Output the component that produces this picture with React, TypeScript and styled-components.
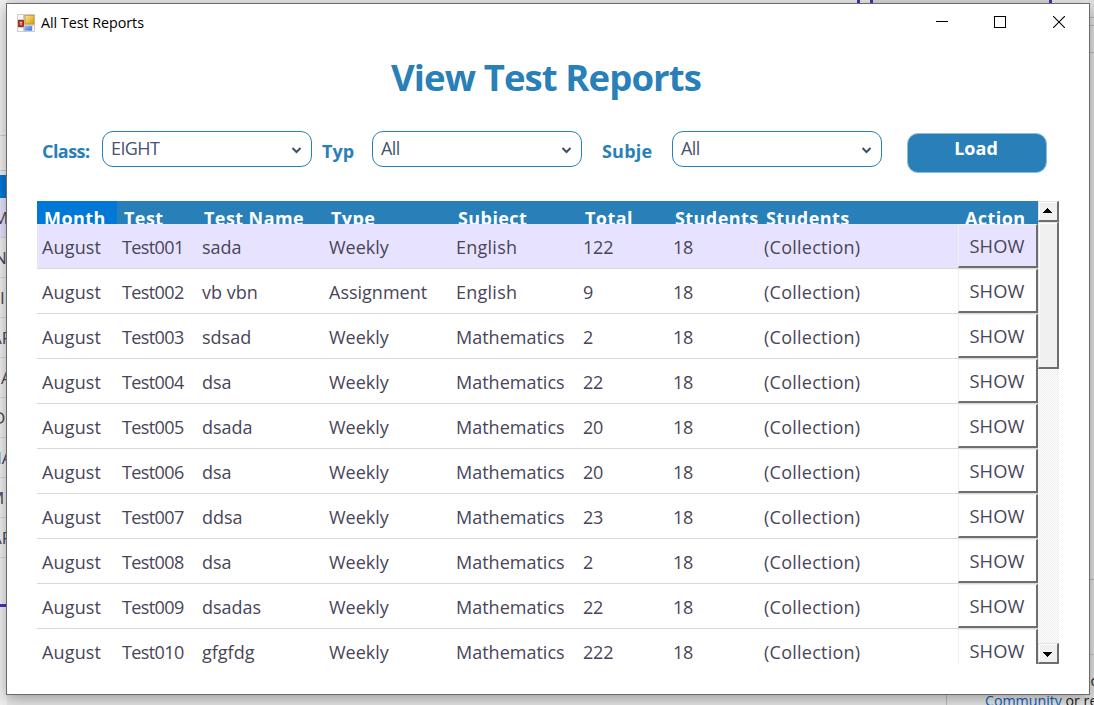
import React from 'react';
import styled, { createGlobalStyle } from 'styled-components';

const blue = '#2980b9';

const GlobalStyle = createGlobalStyle`
  * { box-sizing: border-box; }
  body { margin: 0; overflow: hidden; font-family: 'Open Sans', 'Noto Sans', sans-serif; }
`;

const Desktop = styled.div`
  position: relative;
  width: 1094px;
  height: 705px;
  overflow: hidden;
  background: #e6e6e6;
`;

const LeftStrip = styled.div`
  position: absolute;
  left: 0;
  top: 0;
  width: 7px;
  height: 705px;
  overflow: hidden;
  background: #f0f0f0;
  padding-top: 135px;
`;

const StripGap = styled.div`
  height: 36px;
  border-top: 1px solid #d0d0d0;
  border-bottom: 1px solid #d0d0d0;
`;

const StripHeader = styled.div`
  height: 23px;
  margin-top: 4px;
  background: #0078d7;
`;

const StripRow = styled.div<{ $shift: number; $active?: boolean }>`
  height: 40px;
  line-height: 39px;
  font-size: 17px;
  white-space: nowrap;
  color: #484559;
  border-bottom: 1px solid #d5d3ea;
  background: ${(p) => (p.$active ? '#e7e3ff' : 'transparent')};
  text-indent: ${(p) => p.$shift}px;
`;

const StripRule = styled.div`
  height: 3px;
  margin-top: 46px;
  background: #4535c0;
`;

const TopStrip = styled.div`
  position: absolute;
  left: 857px;
  top: 0;
  width: 195px;
  height: 4px;
  display: flex;
  gap: 10px;
`;

const TopMark = styled.div`
  width: 3px;
  background: #4230b8;
`;

const TopPanel = styled.div`
  flex: 1;
  background: #d4d4d4;
  border-left: 3px solid #4230b8;
  border-right: 3px solid #4230b8;
`;

const RightStrip = styled.div`
  position: absolute;
  right: 0;
  top: 0;
  width: 6px;
  height: 705px;
  background: #e0e0e0;
`;

const RightRule = styled.div<{ $gap: number }>`
  height: 1px;
  margin-top: ${(p) => p.$gap}px;
  background: #b4b4b4;
`;

const HelpPanel = styled.div`
  position: absolute;
  left: 946px;
  top: 654px;
  width: 148px;
  height: 51px;
  border-left: 1px solid #bcbcbc;
  border-top: 1px solid #c0c0c0;
  padding: 15.5px 0 0 38px;
  font-size: 14.2px;
  line-height: 20px;
  white-space: nowrap;
  overflow: hidden;
  color: #1b1b1b;
`;

const HelpLine = styled.div<{ $indent?: number }>`
  padding-left: ${(p) => p.$indent ?? 0}px;
`;

const Link = styled.span`
  color: #0c62c0;
  text-decoration: underline;
`;

const Window = styled.div`
  position: absolute;
  left: 6px;
  top: 3px;
  width: 1084px;
  height: 692px;
  display: flex;
  flex-direction: column;
  background: #fff;
  border: 1px solid #6b6b6b;
  box-shadow: 0 4px 14px rgba(0, 0, 0, 0.32);
`;

const TitleBar = styled.header`
  display: flex;
  align-items: center;
  height: 37px;
  padding: 0 1px 0 10px;
`;

const WindowTitle = styled.span`
  flex: 1;
  padding-left: 6px;
  font-size: 14.3px;
  letter-spacing: -0.03px;
  color: #000;
`;

const WindowButton = styled.span`
  display: flex;
  justify-content: center;
  width: 58.5px;
  padding-bottom: 2px;
`;

const Heading = styled.h1`
  margin: 0;
  height: 76px;
  padding-right: 4px;
  line-height: 72px;
  text-align: center;
  font-size: 36.5px;
  font-weight: 700;
  letter-spacing: -0.9px;
  color: ${blue};
`;

const Filters = styled.div`
  display: flex;
  height: 84px;
  padding: 14px 0 0 35px;
`;

const Label = styled.label<{ $width: number; $spacing: number }>`
  width: ${(p) => p.$width}px;
  line-height: 40px;
  font-size: 18px;
  font-weight: 700;
  letter-spacing: ${(p) => p.$spacing}px;
  color: ${blue};
`;

const Select = styled.div<{ $after: number }>`
  display: flex;
  justify-content: space-between;
  width: 210px;
  height: 36px;
  margin-right: ${(p) => p.$after}px;
  padding: 0 9px 0 8px;
  border: 1px solid ${blue};
  border-radius: 11px;
  line-height: 32px;
  font-size: 18px;
  letter-spacing: -0.6px;
  color: #44546e;
`;

const LoadButton = styled.button`
  width: 140px;
  height: 40px;
  margin-top: 2px;
  padding: 0 2px 10px 0;
  border: 1px solid #8fbcdc;
  border-radius: 11px;
  background: ${blue};
  font: 700 18px/28px 'Open Sans', 'Noto Sans', sans-serif;
  color: #fff;
`;

const Grid = styled.div`
  display: flex;
  width: 1022px;
  height: 463px;
  margin-left: 30px;
`;

const Table = styled.div`
  width: 1001px;
  overflow: hidden;
`;

const columns = '80px 80px 127px 127px 127px 90px 91px 199px 80px';

const HeaderRow = styled.div`
  display: grid;
  grid-template-columns: ${columns};
  height: 23px;
  background: ${blue};
`;

const HeaderCell = styled.div<{ $active?: boolean }>`
  height: 23px;
  overflow: hidden;
  padding-left: 7px;
  background: ${(p) => (p.$active ? '#0078d7' : 'transparent')};
  line-height: 35px;
  font-size: 18px;
  font-weight: 700;
  letter-spacing: 0.42px;
  white-space: nowrap;
  color: #fff;
`;

const Row = styled.div<{ $active: boolean }>`
  display: grid;
  grid-template-columns: ${columns};
  height: 45px;
  background: ${(p) => (p.$active ? '#e7e3ff' : '#fff')};
  border-bottom: 1px solid #dadada;
`;

const Cell = styled.div<{ $spacing: number }>`
  padding-left: 5px;
  line-height: 47px;
  font-size: 18px;
  letter-spacing: ${(p) => p.$spacing}px;
  white-space: nowrap;
  color: #484559;
`;

const ShowButton = styled.div`
  height: 44px;
  border-style: solid;
  border-width: 1px 2px 2px 1px;
  border-color: #efefef #6e6e6e #6e6e6e #efefef;
  line-height: 42px;
  padding-right: 1px;
  text-align: center;
  font-size: 18.3px;
  letter-spacing: 0.15px;
  color: #484559;
`;

const ScrollBar = styled.div`
  display: flex;
  flex-direction: column;
  width: 21px;
  background: repeating-conic-gradient(#ececec 0 25%, #fff 0 50%) 0 0 / 2px 2px;
`;

const ScrollPart = styled.div<{ $height: number; $last?: boolean }>`
  display: flex;
  align-items: flex-start;
  height: ${(p) => p.$height}px;
  margin-top: ${(p) => (p.$last ? 'auto' : '0')};
  padding: ${(p) => (p.$last ? '8px' : '6px')} 0 0 4px;
  background: #f0f0f0;
  border-style: solid;
  border-width: 1px 2px 2px 1px;
  border-color: #e3e3e3 #6e6e6e #6e6e6e #e3e3e3;
  box-shadow: inset 1px 1px #fff;
`;

const AppIcon = () => (
  <svg width="18" height="18" viewBox="0 0 18 18">
    <defs>
      <linearGradient id="gold" x1="0" y1="0" x2="1" y2="1">
        <stop offset="0" stopColor="#ffe88a" />
        <stop offset="1" stopColor="#d99b08" />
      </linearGradient>
      <linearGradient id="azure" x1="0" y1="0" x2="1" y2="1">
        <stop offset="0" stopColor="#9cc0ff" />
        <stop offset="1" stopColor="#3c70d8" />
      </linearGradient>
    </defs>
    <rect width="18" height="18" fill="#cdcdcd" />
    <path d="M1 1h5v4h-5zM1 14h5v3h-5zM15.5 12h1.5v5h-1.5z" fill="#fafafa" />
    <rect x="1.5" y="6.5" width="5" height="6" fill="#c03a28" stroke="#8f1c12" strokeWidth=".8" />
    <path d="M3 8h2v1h-.5v2h-1v-2h-.5z" fill="#f4cfc4" />
    <rect x="8" y="1.5" width="9" height="8.5" fill="url(#gold)" stroke="#b98712" strokeWidth=".6" />
    <rect x="7.5" y="12" width="7.5" height="4.5" fill="url(#azure)" />
  </svg>
);

const Chevron = () => (
  <svg width="11" height="34" viewBox="0 0 11 34">
    <path d="M1.5 16l4 4 4-4" fill="none" stroke="#3f506c" strokeWidth="2" />
  </svg>
);

const Arrow = ({ down }: { down?: boolean }) => (
  <svg width="9" height="5" viewBox="0 0 9 5" shapeRendering="crispEdges">
    <path d={down ? 'M0 0h9L4.5 5z' : 'M0 5h9L4.5 0z'} fill="#000" />
  </svg>
);

const headers = ['Month', 'Test', 'Test Name', 'Type', 'Subject', 'Total', 'Students', 'Students', 'Action'];

const spacings = [0.15, -0.6, 0, 0, 0, -0.2, -0.2, 0.25];

const rows = [
  ['Test001', 'sada', 'Weekly', 'English', '122'],
  ['Test002', 'vb vbn', 'Assignment', 'English', '9'],
  ['Test003', 'sdsad', 'Weekly', 'Mathematics', '2'],
  ['Test004', 'dsa', 'Weekly', 'Mathematics', '22'],
  ['Test005', 'dsada', 'Weekly', 'Mathematics', '20'],
  ['Test006', 'dsa', 'Weekly', 'Mathematics', '20'],
  ['Test007', 'ddsa', 'Weekly', 'Mathematics', '23'],
  ['Test008', 'dsa', 'Weekly', 'Mathematics', '2'],
  ['Test009', 'dsadas', 'Weekly', 'Mathematics', '22'],
  ['Test010', 'gfgfdg', 'Weekly', 'Mathematics', '222'],
];

const behind: [string, number][] = [
  ['M', -7], ['N', -6], ['I', 0], ['AR', -9], ['A', 1], ['D', -7], ['NA', -11], ['M', -11], ['AR', -9],
];

const spacingFor = (text: string, column: number) => (text === 'English' ? 0.25 : spacings[column]);

export default function App() {
  return (
    <>
      <GlobalStyle />
      <Desktop>
        <LeftStrip>
          <StripGap />
          <StripHeader />
          {behind.map(([text, shift], i) => (
            <StripRow key={i} $shift={shift} $active={i === 0}>{text}</StripRow>
          ))}
          <StripRule />
        </LeftStrip>
        <TopStrip>
          <TopMark />
          <TopPanel />
        </TopStrip>
        <RightStrip>
          <RightRule $gap={17} />
          <RightRule $gap={7} />
          <RightRule $gap={26} />
          <RightRule $gap={526} />
          <RightRule $gap={74} />
        </RightStrip>
        <HelpPanel>
          <HelpLine $indent={97}>oc</HelpLine>
          <HelpLine><Link>Community</Link> or re</HelpLine>
        </HelpPanel>
        <Window>
          <TitleBar>
            <AppIcon />
            <WindowTitle>All Test Reports</WindowTitle>
            <WindowButton>
              <svg width="12" height="12"><path d="M0 5.5h12" stroke="#000" /></svg>
            </WindowButton>
            <WindowButton>
              <svg width="12" height="12"><rect x=".5" y=".5" width="11" height="11" fill="none" stroke="#000" /></svg>
            </WindowButton>
            <WindowButton>
              <svg width="12" height="12"><path d="M0 0l12 12M12 0L0 12" stroke="#000" strokeWidth="1.1" /></svg>
            </WindowButton>
          </TitleBar>
          <Heading>View Test Reports</Heading>
          <Filters>
            <Label $width={60} $spacing={-0.55}>Class:</Label>
            <Select $after={10}>EIGHT<Chevron /></Select>
            <Label $width={50} $spacing={0}>Typ</Label>
            <Select $after={20}>All<Chevron /></Select>
            <Label $width={70} $spacing={0.2}>Subje</Label>
            <Select $after={25}>All<Chevron /></Select>
            <LoadButton>Load</LoadButton>
          </Filters>
          <Grid>
            <Table>
              <HeaderRow>
                {headers.map((h, i) => <HeaderCell key={i} $active={i === 0}>{h}</HeaderCell>)}
              </HeaderRow>
              {rows.map((r, i) => (
                <Row key={r[0]} $active={i === 0}>
                  {['August', ...r, '18', '(Collection)'].map((c, j) => (
                    <Cell key={j} $spacing={spacingFor(c, j)}>{c}</Cell>
                  ))}
                  <ShowButton>SHOW</ShowButton>
                </Row>
              ))}
            </Table>
            <ScrollBar>
              <ScrollPart $height={21}><Arrow /></ScrollPart>
              <ScrollPart $height={147} />
              <ScrollPart $height={21} $last><Arrow down /></ScrollPart>
            </ScrollBar>
          </Grid>
        </Window>
      </Desktop>
    </>
  );
}
